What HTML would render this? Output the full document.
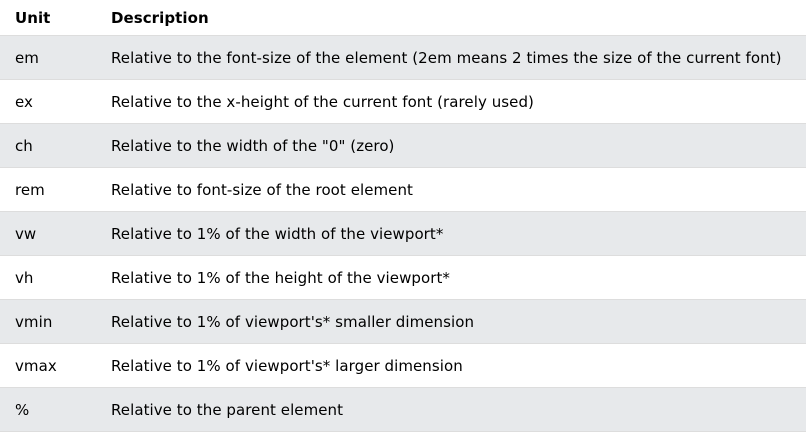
<!DOCTYPE html>
<html><head><style>
body{margin:0;background:#fff;font-family:"DejaVu Sans",Verdana,sans-serif;font-size:15px;color:#000;letter-spacing:0.06px}
table{border-collapse:collapse;width:806px;}
td,th{padding:0 0 0 15px;text-align:left;height:43px;border-bottom:1px solid #ddd;white-space:nowrap}
th{height:35px;font-weight:bold;}
td:first-child,th:first-child{width:81px;}
td:last-child,th:last-child{padding-left:15px}
tr:nth-child(even) td{background:#E7E9EB}
</style></head><body>
<table>
<tr><th>Unit</th><th>Description</th></tr>
<tr><td>em</td><td>Relative to the font-size of the element (2em means 2 times the size of the current font)</td></tr>
<tr><td>ex</td><td>Relative to the x-height of the current font (rarely used)</td></tr>
<tr><td>ch</td><td>Relative to the width of the "0" (zero)</td></tr>
<tr><td>rem</td><td>Relative to font-size of the root element</td></tr>
<tr><td>vw</td><td>Relative to 1% of the width of the viewport*</td></tr>
<tr><td>vh</td><td>Relative to 1% of the height of the viewport*</td></tr>
<tr><td>vmin</td><td>Relative to 1% of viewport's* smaller dimension</td></tr>
<tr><td>vmax</td><td>Relative to 1% of viewport's* larger dimension</td></tr>
<tr><td>%</td><td>Relative to the parent element</td></tr>
</table>
</body></html>
